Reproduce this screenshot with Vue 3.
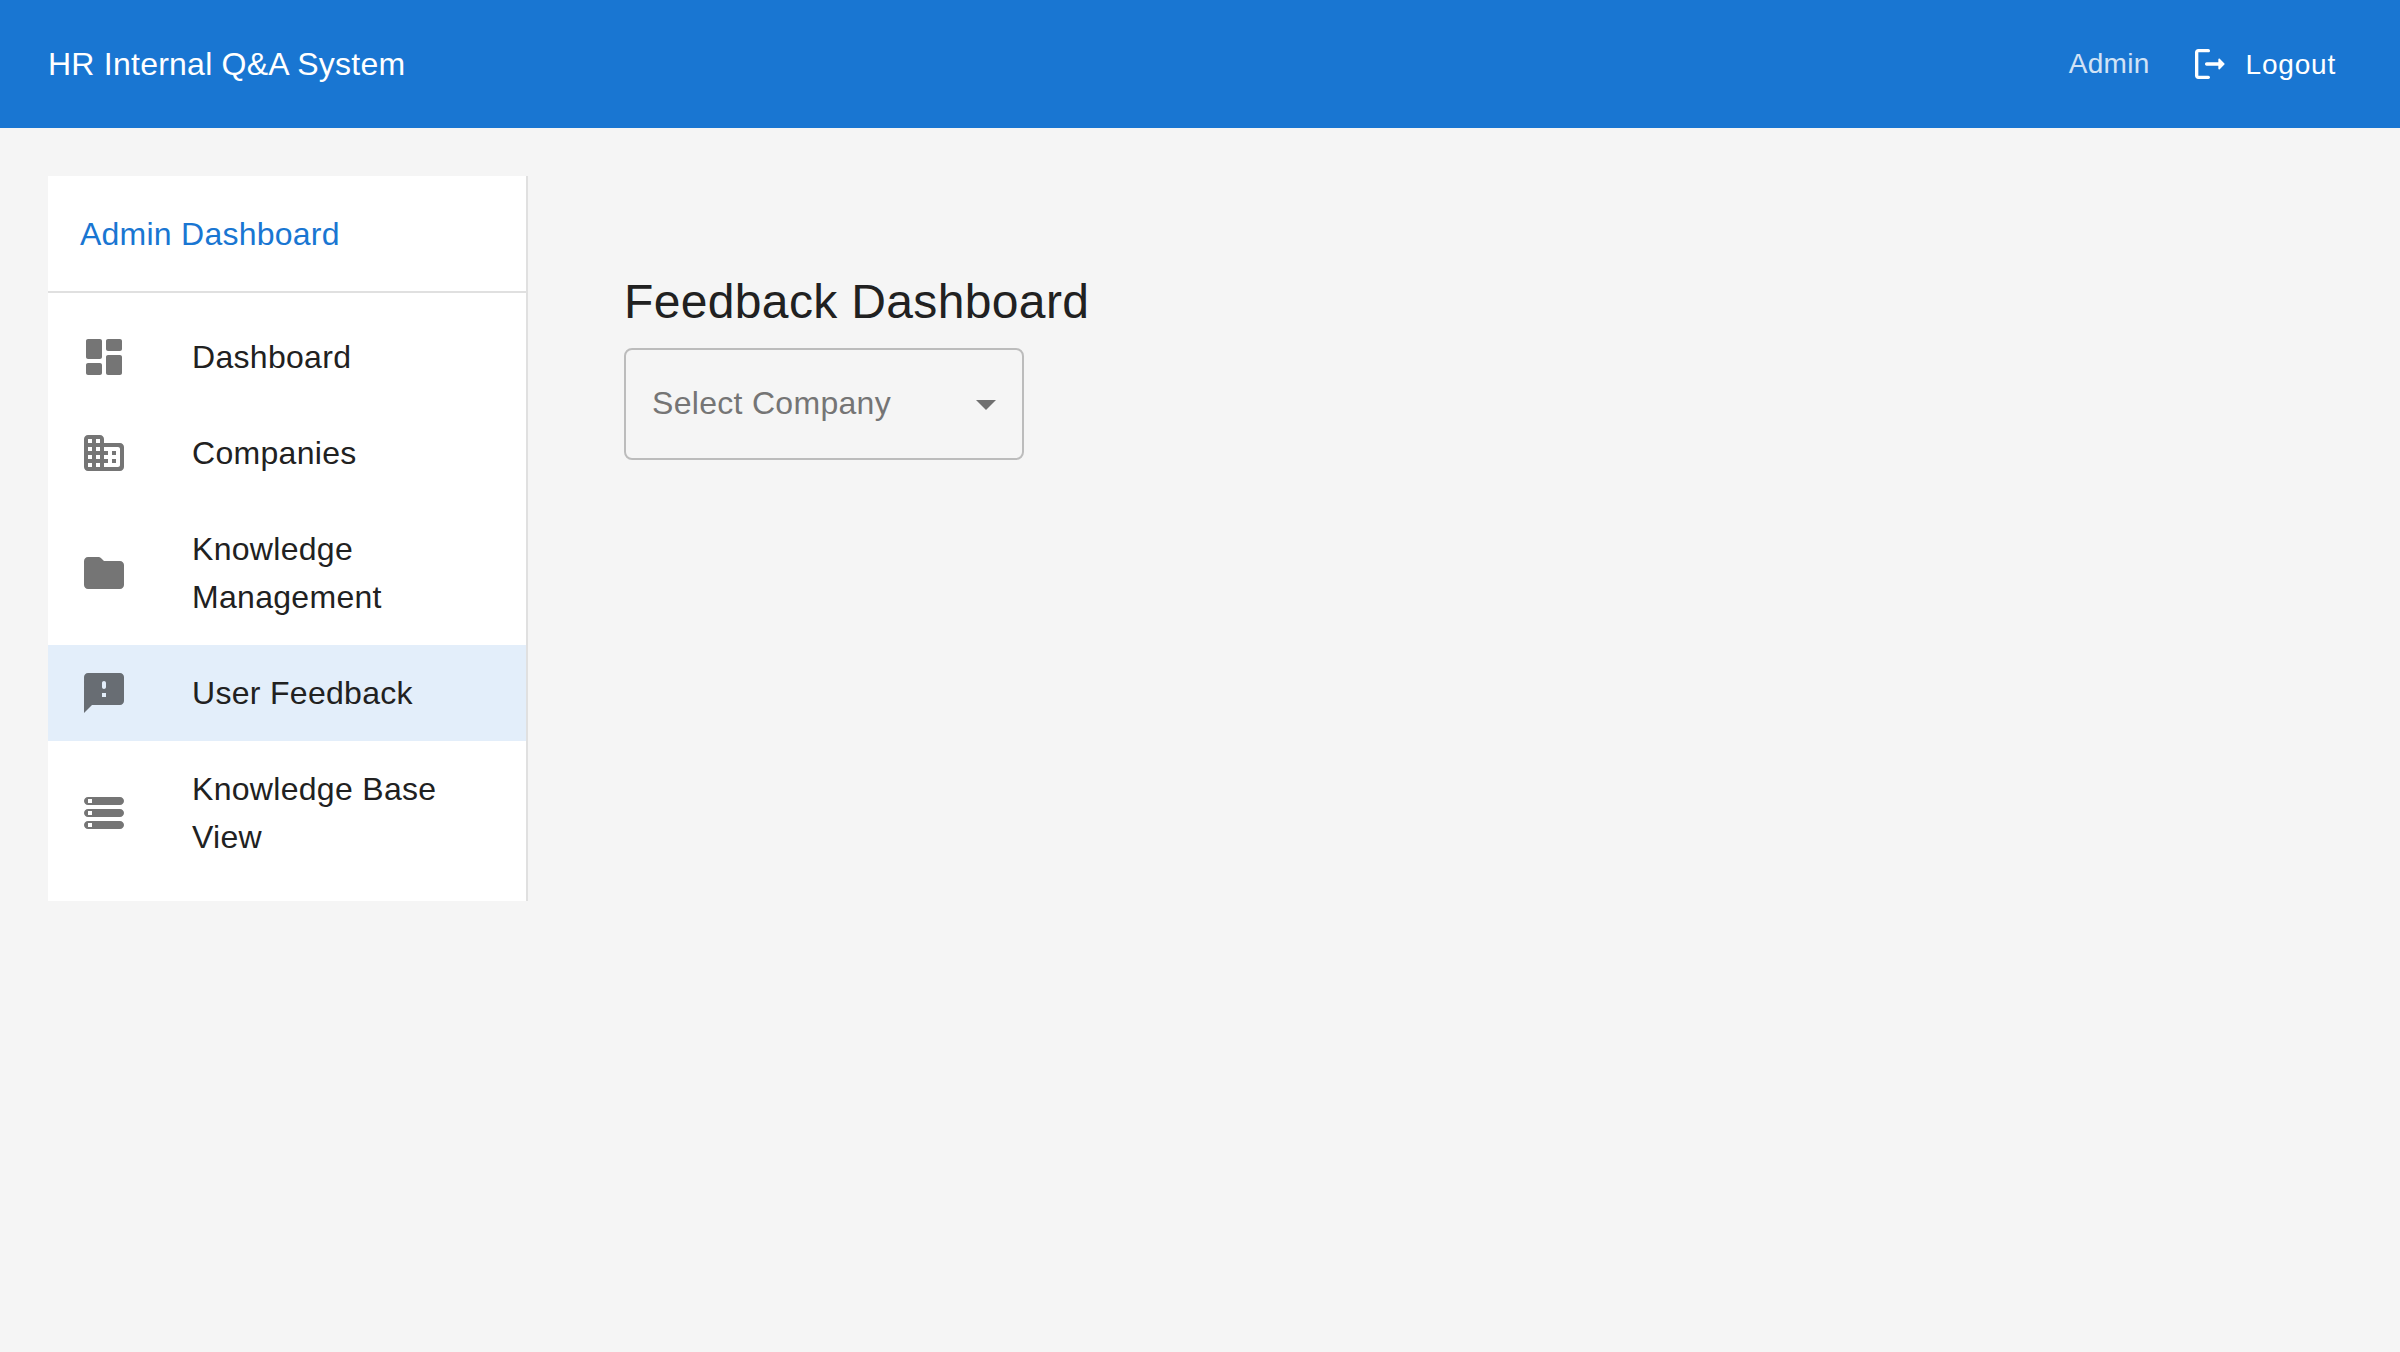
<script setup>
const items = [
  {
    label: 'Dashboard',
    paths: ['M4 13h6c.55 0 1-.45 1-1V4c0-.55-.45-1-1-1H4c-.55 0-1 .45-1 1v8c0 .55.45 1 1 1m0 8h6c.55 0 1-.45 1-1v-4c0-.55-.45-1-1-1H4c-.55 0-1 .45-1 1v4c0 .55.45 1 1 1m10 0h6c.55 0 1-.45 1-1v-8c0-.55-.45-1-1-1h-6c-.55 0-1 .45-1 1v8c0 .55.45 1 1 1M13 4v4c0 .55.45 1 1 1h6c.55 0 1-.45 1-1V4c0-.55-.45-1-1-1h-6c-.55 0-1 .45-1 1'],
  },
  {
    label: 'Companies',
    paths: ['M12 7V5c0-1.1-.9-2-2-2H4c-1.1 0-2 .9-2 2v14c0 1.1.9 2 2 2h16c1.1 0 2-.9 2-2V9c0-1.1-.9-2-2-2zM6 19H4v-2h2zm0-4H4v-2h2zm0-4H4V9h2zm0-4H4V5h2zm4 12H8v-2h2zm0-4H8v-2h2zm0-4H8V9h2zm0-4H8V5h2zm9 12h-7v-2h2v-2h-2v-2h2v-2h-2V9h7c.55 0 1 .45 1 1v8c0 .55-.45 1-1 1m-1-8h-2v2h2zm0 4h-2v2h2z'],
  },
  {
    label: 'Knowledge Management',
    paths: ['M10.59 4.59C10.21 4.21 9.7 4 9.17 4H4c-1.1 0-1.99.9-1.99 2L2 18c0 1.1.9 2 2 2h16c1.1 0 2-.9 2-2V8c0-1.1-.9-2-2-2h-8z'],
  },
  {
    label: 'User Feedback',
    selected: true,
    paths: ['M20 2H4c-1.1 0-1.99.9-1.99 2L2 22l4-4h14c1.1 0 2-.9 2-2V4c0-1.1-.9-2-2-2m-8 8c-.55 0-1-.45-1-1V7c0-.55.45-1 1-1s1 .45 1 1v2c0 .55-.45 1-1 1m1 4h-2v-2h2z'],
  },
  {
    label: 'Knowledge Base View',
    paths: ['M4 20h16c1.1 0 2-.9 2-2s-.9-2-2-2H4c-1.1 0-2 .9-2 2s.9 2 2 2m0-3h2v2H4zM2 6c0 1.1.9 2 2 2h16c1.1 0 2-.9 2-2s-.9-2-2-2H4c-1.1 0-2 .9-2 2m4 1H4V5h2zm-2 7h16c1.1 0 2-.9 2-2s-.9-2-2-2H4c-1.1 0-2 .9-2 2s.9 2 2 2m0-3h2v2H4z'],
  },
]
</script>

<template>
  <div class="page">
    <header class="appbar">
      <div class="title">HR Internal Q&amp;A System</div>
      <span class="user">Admin</span>
      <button class="logout" type="button">
        <svg viewBox="0 0 24 24">
          <path d="M5 5h6c.55 0 1-.45 1-1s-.45-1-1-1H5c-1.1 0-2 .9-2 2v14c0 1.1.9 2 2 2h6c.55 0 1-.45 1-1s-.45-1-1-1H5z" />
          <path d="m20.65 11.65-2.79-2.79c-.32-.32-.86-.1-.86.35V11h-7c-.55 0-1 .45-1 1s.45 1 1 1h7v1.79c0 .45.54.67.85.35l2.79-2.79c.2-.19.2-.51.01-.7" />
        </svg>
        Logout
      </button>
    </header>
    <div class="body">
      <nav class="sidebar">
        <div class="heading">Admin Dashboard</div>
        <ul class="list">
          <li v-for="item in items" :key="item.label" class="item" :class="{ selected: item.selected }">
            <span class="icon">
              <svg viewBox="0 0 24 24"><path v-for="d in item.paths" :key="d" :d="d" /></svg>
            </span>
            <span class="label">{{ item.label }}</span>
          </li>
        </ul>
      </nav>
      <main class="content">
        <h1>Feedback Dashboard</h1>
        <div class="select">
          <span>Select Company</span>
          <svg viewBox="0 0 24 24"><path d="m7 10 5 5 5-5z" /></svg>
        </div>
      </main>
    </div>
  </div>
</template>

<style>
body {
  margin: 0;
  background: #f5f5f5;
}
</style>

<style scoped>
.page {
  min-height: 1352px;
  box-sizing: border-box;
  background: #f5f5f5;
  color: #212121;
  font-family: "Liberation Sans", Helvetica, Arial, sans-serif;
}
svg {
  display: block;
  flex-shrink: 0;
  fill: currentColor;
}
.appbar {
  display: flex;
  align-items: center;
  height: 128px;
  padding: 0 48px;
  box-sizing: border-box;
  background: #1976d2;
  color: #fff;
}
.title {
  flex: 1;
  padding-top: 2px;
  font-size: 32px;
  line-height: 1.6;
  letter-spacing: 0.0075em;
}
.user {
  margin-right: 32px;
  font-size: 28px;
  line-height: 1.43;
  letter-spacing: 0.01071em;
  opacity: 0.8;
}
.logout {
  display: flex;
  align-items: center;
  padding: 12px 16px;
  border: 0;
  background: none;
  color: inherit;
  font-family: inherit;
  font-size: 28px;
  line-height: 1.75;
  letter-spacing: 0.02857em;
}
.logout svg {
  width: 40px;
  height: 40px;
  margin: 0 16px 0 -8px;
}
.body {
  display: flex;
  align-items: flex-start;
  padding: 48px;
}
.sidebar {
  width: 480px;
  box-sizing: border-box;
  border-right: 2px solid #e0e0e0;
  background: #fff;
}
.heading {
  padding: 33px 32px 31px;
  border-bottom: 2px solid #e0e0e0;
  color: #1976d2;
  font-size: 32px;
  line-height: 1.6;
  letter-spacing: 0.0075em;
}
.list {
  margin: 0;
  padding: 16px 0;
  list-style: none;
}
.item {
  display: flex;
  align-items: center;
  padding: 16px 32px;
}
.item.selected {
  background: rgba(25, 118, 210, 0.12);
}
.icon {
  width: 112px;
  flex-shrink: 0;
  color: rgba(0, 0, 0, 0.54);
}
.icon svg {
  width: 48px;
  height: 48px;
}
.label {
  flex: 1;
  margin: 8px 0;
  font-size: 32px;
  line-height: 48px;
  letter-spacing: 0.00938em;
}
.content {
  flex: 1;
  padding: 94px 96px 0;
}
h1 {
  margin: 0;
  font-size: 48px;
  font-weight: 400;
  line-height: 64px;
  letter-spacing: 0.00735em;
}
.select {
  display: flex;
  align-items: center;
  justify-content: space-between;
  width: 400px;
  height: 112px;
  margin-top: 14px;
  padding: 0 12px 0 26px;
  box-sizing: border-box;
  border: 2px solid rgba(0, 0, 0, 0.23);
  border-radius: 8px;
  color: #757575;
  font-size: 32px;
  line-height: 46px;
  letter-spacing: 0.00938em;
}
.select span {
  margin-bottom: 2px;
}
.select svg {
  width: 48px;
  height: 48px;
  color: rgba(0, 0, 0, 0.54);
}
</style>
